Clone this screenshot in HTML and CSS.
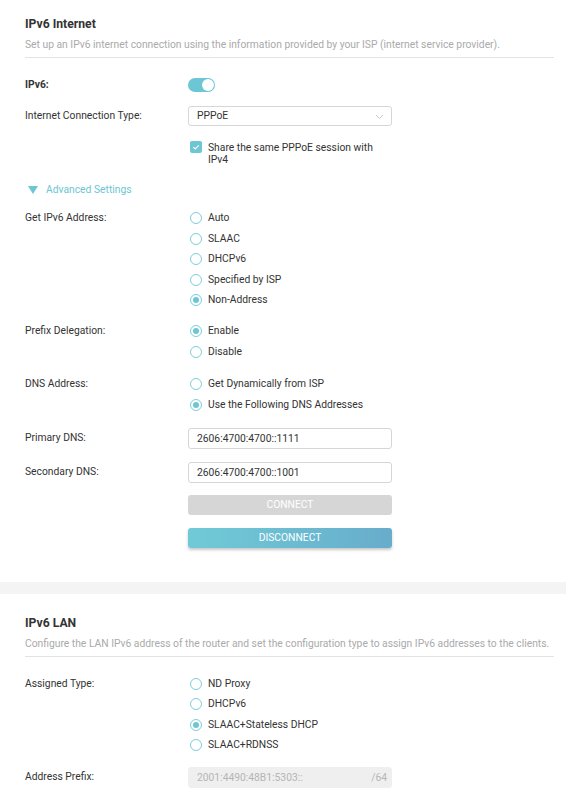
FILE: index.html
```html
<!DOCTYPE html>
<html>
<head>
<meta charset="utf-8">
<link rel="stylesheet" href="styles.css">
</head>
<body>
<section class="section first">
  <div class="title">IPv6 Internet</div>
  <div class="desc">Set up an IPv6 internet connection using the information provided by your ISP (internet service provider).</div>

  <div class="row r-ipv6">
    <div class="label bold">IPv6:</div>
    <div class="control"><span class="toggle"><span class="knob"></span></span></div>
  </div>

  <div class="row r-select">
    <div class="label">Internet Connection Type:</div>
    <div class="control">
      <div class="select">PPPoE
        <svg class="chev" width="9" height="6" viewBox="0 0 9 6"><path d="M1 1l3.5 3.5L8 1" fill="none" stroke="#c8c8c8" stroke-width="1"/></svg>
      </div>
    </div>
  </div>

  <div class="row r-check">
    <div class="label"></div>
    <div class="control check-wrap">
      <span class="checkbox"><svg width="12" height="12" viewBox="0 0 12 12"><path d="M3.3 6.1l1.9 1.8 3.6-3.6" fill="none" stroke="#fff" stroke-width="1.2"/></svg></span>
      <span class="check-text">Share the same PPPoE session with IPv4</span>
    </div>
  </div>

  <div class="advanced">
    <svg class="tri" width="10" height="8" viewBox="0 0 10 8"><path d="M0 0h10L5 8z" fill="#6cc6d3"/></svg>
    <span>Advanced Settings</span>
  </div>

  <div class="row r-get">
    <div class="label">Get IPv6 Address:</div>
    <div class="control radios">
      <div class="radio"><span class="dot"></span>Auto</div>
      <div class="radio"><span class="dot"></span>SLAAC</div>
      <div class="radio"><span class="dot"></span>DHCPv6</div>
      <div class="radio"><span class="dot"></span>Specified by ISP</div>
      <div class="radio on"><span class="dot"></span>Non-Address</div>
    </div>
  </div>

  <div class="row r-group">
    <div class="label">Prefix Delegation:</div>
    <div class="control radios">
      <div class="radio on"><span class="dot"></span>Enable</div>
      <div class="radio"><span class="dot"></span>Disable</div>
    </div>
  </div>

  <div class="row r-group r-dns">
    <div class="label">DNS Address:</div>
    <div class="control radios">
      <div class="radio"><span class="dot"></span>Get Dynamically from ISP</div>
      <div class="radio on"><span class="dot"></span>Use the Following DNS Addresses</div>
    </div>
  </div>

  <div class="row r-input r-primary">
    <div class="label">Primary DNS:</div>
    <div class="control"><div class="input">2606:4700:4700::1111</div></div>
  </div>

  <div class="row r-input r-secondary">
    <div class="label">Secondary DNS:</div>
    <div class="control"><div class="input">2606:4700:4700::1001</div></div>
  </div>

  <div class="row r-btn r-connect">
    <div class="label"></div>
    <div class="control"><div class="btn connect">CONNECT</div></div>
  </div>

  <div class="row r-btn r-disconnect">
    <div class="label"></div>
    <div class="control"><div class="btn disconnect">DISCONNECT</div></div>
  </div>
</section>

<div class="band"></div>

<section class="section second">
  <div class="title">IPv6 LAN</div>
  <div class="desc">Configure the LAN IPv6 address of the router and set the configuration type to assign IPv6 addresses to the clients.</div>

  <div class="row r-assigned">
    <div class="label">Assigned Type:</div>
    <div class="control radios">
      <div class="radio"><span class="dot"></span>ND Proxy</div>
      <div class="radio"><span class="dot"></span>DHCPv6</div>
      <div class="radio on"><span class="dot"></span>SLAAC+Stateless DHCP</div>
      <div class="radio"><span class="dot"></span>SLAAC+RDNSS</div>
    </div>
  </div>

  <div class="row r-input r-prefix">
    <div class="label">Address Prefix:</div>
    <div class="control"><div class="input disabled"><span>2001:4490:48B1:5303::</span><span>/64</span></div></div>
  </div>
</section>
</body>
</html>
```

FILE: styles.css
```css
* { box-sizing: border-box; }
html, body { margin: 0; padding: 0; background: #fff; }
body {
  font-family: Roboto, "Liberation Sans", Arial, sans-serif;
  font-size: 10.3px;
  color: #333;
  width: 566px;
  overflow: hidden;
}
.section { padding: 16px 12px 0 25px; }
.section.first { padding-bottom: 34px; }
.section.second { padding-top: 21px; padding-bottom: 20px; }
.title { font-size: 12.2px; font-weight: bold; line-height: 16px; color: #333; }
.desc {
  margin-top: 6px;
  line-height: 14px;
  color: #aaa;
  padding-bottom: 5px;
  border-bottom: 1px solid #e3e3e3;
  white-space: nowrap;
}
.row { display: flex; align-items: flex-start; }
.label { width: 163px; flex: none; line-height: 14px; color: #333; }
.label.bold { font-weight: bold; }
.control { width: 204px; flex: none; }

.r-ipv6 { margin-top: 20px; height: 14px; }
.toggle {
  display: flex; justify-content: flex-end; align-items: center;
  width: 27px; height: 14px; border-radius: 7px;
  background: #6cc6d3; padding: 1px;
}
.knob { width: 12px; height: 12px; border-radius: 50%; background: #fff; }

.r-select { margin-top: 14px; }
.r-select .label { line-height: 20px; }
.select {
  position: relative;
  height: 20px; line-height: 18px;
  border: 1px solid #d6d6d6; border-radius: 3px;
  padding-left: 8px; color: #333;
}
.chev { position: absolute; right: 7px; top: 7px; }

.r-check { margin-top: 15px; }
.check-wrap { display: flex; align-items: flex-start; padding-left: 2px; }
.checkbox {
  width: 12px; height: 12px; border-radius: 2px; background: #6cc6d3;
  flex: none; display: flex;
}
.check-text { margin-left: 6px; line-height: 12px; margin-top: 1px; width: 184px; }

.advanced {
  margin-top: 17px; display: flex; align-items: center;
  height: 14px; line-height: 14px; color: #6cc6d3; padding-left: 3px;
}
.tri { margin-right: 8px; }

.r-get { margin-top: 14px; }
.r-group { margin-top: 17px; }
.r-dns { margin-top: 18px; }
.radios { display: flex; flex-direction: column; gap: 6.6px; padding-left: 2px; }
.radio { display: flex; align-items: center; height: 14px; line-height: 14px; color: #333; }
.dot {
  width: 12px; height: 12px; border-radius: 50%;
  border: 1px solid #7ccfda; margin-right: 6px; flex: none;
  display: flex; align-items: center; justify-content: center;
}
.radio.on .dot::after {
  content: ""; width: 6px; height: 6px; border-radius: 50%; background: #6cc6d3;
}

.r-input .label { line-height: 19px; }
.r-primary { margin-top: 16px; }
.r-secondary { margin-top: 13px; }
.input {
  height: 21px; line-height: 19px;
  border: 1px solid #d6d6d6; border-radius: 3px;
  padding-left: 8px; color: #333;
}
.input.disabled {
  border-color: #efefef; background: #efefef; color: #b5b5b5;
  display: flex; justify-content: space-between; padding-right: 4px;
}

.r-connect { margin-top: 12px; }
.r-disconnect { margin-top: 13px; }
.btn {
  height: 20px; line-height: 20px; border-radius: 3px;
  text-align: center; color: #fff;
}
.btn.connect { background: #d6d6d6; }
.btn.disconnect {
  background: linear-gradient(to right, #70cad6, #68adcc);
  box-shadow: 0 2px 3px rgba(0,0,0,0.22);
}

.band { height: 12px; background: #f4f4f4; }

.r-assigned { margin-top: 20px; }
.r-prefix { margin-top: 15px; }
```
